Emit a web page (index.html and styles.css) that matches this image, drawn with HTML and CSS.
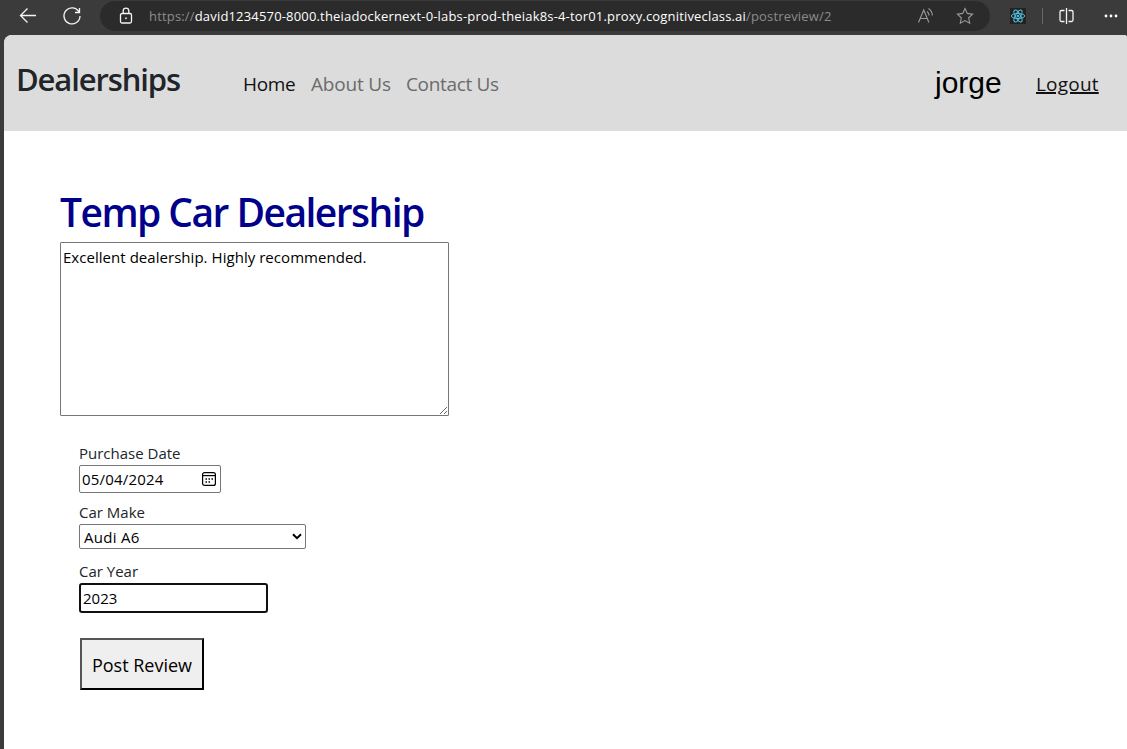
FILE: index.html
```html
<!DOCTYPE html>
<html lang="en">
<head>
<meta charset="utf-8">
<title>Post Review</title>
<link rel="stylesheet" href="styles.css">
</head>
<body>
<div class="toolbar">
  <svg class="icon back" width="24" height="24" viewBox="0 0 24 24"><path d="M20 11.5H4.5M11.5 4.5l-7 7 7 7"/></svg>
  <svg class="icon reload" width="24" height="24" viewBox="0 0 24 24"><path d="M19.1 8.2A8 8 0 1 0 20 12M19.5 4v4.5H15"/></svg>
  <div class="address">
    <svg class="icon lock" width="16" height="18" viewBox="0 0 16 18"><rect x="2.5" y="6.5" width="11" height="9.5" rx="1.5"/><path d="M5.2 6.5V4a2.8 2.8 0 0 1 5.600 0v2.500"/><rect class="solid" x="7.200" y="10.500" width="1.600" height="1.600"/></svg>
    <div class="url"><span class="scheme">https://</span><span class="host">david1234570-8000.theiadockernext-0-labs-prod-theiak8s-4-tor01.proxy.cognitiveclass.ai</span><span class="path">/postreview/2</span></div>
    <svg class="icon dim read" width="18" height="18" viewBox="0 0 18 18"><path d="M1.500 15.500L6.700 3l5.200 12.500M3.300 11.500h6.900M10 4.500q2 1.500 2 4M11.500 1.500q3.700 2.500 3.800 7"/></svg>
    <svg class="icon dim star" width="18" height="18" viewBox="0 0 18 18"><path d="M9 1.500l2.300 4.900 5.300.7-3.900 3.700 1 5.400L9 13.600l-4.700 2.600 1-5.400L1.400 7.100l5.300-.7z"/></svg>
  </div>
  <svg class="react" width="16" height="16" viewBox="0 0 16 16"><rect class="tile" width="16" height="16"/><g><ellipse cx="8" cy="8" rx="6.700" ry="2.500"/><ellipse cx="8" cy="8" rx="6.700" ry="2.500" transform="rotate(60 8 8)"/><ellipse cx="8" cy="8" rx="6.700" ry="2.500" transform="rotate(120 8 8)"/></g><circle cx="8" cy="8" r="1.300"/></svg>
  <span class="divider"></span>
  <svg class="icon split" width="18" height="18" viewBox="0 0 18 18"><path d="M6.500 3.500H3.500a1.500 1.500 0 0 0-1.500 1.500v8a1.500 1.500 0 0 0 1.500 1.500h3M10.500 3.500h3A1.500 1.500 0 0 1 15 5v8a1.500 1.500 0 0 1-1.500 1.500h-3M8.500 1v16"/></svg>
  <svg class="more" width="16" height="4" viewBox="0 0 16 4"><circle cx="3" cy="2" r="1.400"/><circle cx="8" cy="2" r="1.400"/><circle cx="13" cy="2" r="1.400"/></svg>
</div>
<div class="page">
  <nav class="navbar">
    <h2 class="brand">Dealerships</h2>
    <div class="links"><a class="home">Home</a><a class="about">About Us</a><a class="contact">Contact Us</a></div>
    <span class="user">jorge</span>
    <a class="logout">Logout</a>
  </nav>
  <main class="content">
    <h1 class="title">Temp Car Dealership</h1>
    <textarea class="review">Excellent dealership. Highly recommended.</textarea>
    <div class="form">
      <label class="label purchase">Purchase Date</label>
      <div class="date"><span>05/04/2024</span>
        <svg class="calendar" width="16" height="16" viewBox="0 0 16 16"><rect x="1.600" y="1.600" width="12.800" height="12.800" rx="2"/><path d="M1.600 4.600h12.800"/><path class="dots" d="M7.500 8h1.500M10.500 8H12M4.500 8H6M4.500 11H6M7.500 11H9"/></svg>
      </div>
      <label class="label make">Car Make</label>
      <div class="select"><span>Audi A6</span>
        <svg width="10" height="7" viewBox="0 0 10 7"><path d="M1 1.200l4 4 4-4"/></svg>
      </div>
      <label class="label year-label">Car Year</label>
      <input class="year" value="2023">
      <button class="submit"><span>Post Review</span></button>
    </div>
  </main>
</div>
</body>
</html>
```
FILE: styles.css
```css
* { box-sizing: border-box; }
body { margin: 0; width: 1127px; height: 749px; overflow: hidden; background: #3b3b3b; font-family: "Open Sans", "Noto Sans", sans-serif; color: #212529; }
.toolbar { height: 35px; display: flex; align-items: center; padding: 0 8px 4px 16px; background: #3b3b3b; }
.toolbar > * { flex: none; }
.icon { fill: none; stroke: #f4f4f4; stroke-width: 1.3; }
.icon .solid { fill: #f4f4f4; stroke: none; }
.icon.dim { stroke: #9a9a9a; stroke-width: 1.1; }
.reload { margin-left: 20px; }
.address { width: 890px; height: 30px; margin-left: 16px; padding: 0 16px 0 18px; display: flex; align-items: center; border-radius: 15px; background: #2b2b2b; }
.address > * { flex: none; }
.url { width: 753px; margin: 0 15px; font-size: 13px; line-height: 20px; letter-spacing: .173px; white-space: nowrap; color: #8b8b8b; }
.host { color: #fff; }
.star { margin-left: 21px; }
.react { margin-left: 20px; }
.react .tile { fill: #222; }
.react g { fill: none; stroke: #52c1de; stroke-width: 1; }
.react circle { fill: #52c1de; }
.divider { width: 1px; height: 16px; margin-left: 16px; background: #666; }
.split { margin-left: 15px; }
.more { margin-left: 27px; fill: #fff; }
.page { height: 714px; margin-left: 4px; background: #fff; border-radius: 8px 3px 0 0; overflow: hidden; }
.navbar { height: 96px; display: flex; align-items: flex-start; background: #dcdcdc; white-space: nowrap; }
.brand { width: 227px; margin: 25px 0 0; padding-left: 12px; font-size: 31px; line-height: 39px; font-weight: 600; letter-spacing: -1.12px; }
.links { display: flex; width: 704px; margin-top: 34px; padding-left: 12px; font-size: 19px; line-height: 30px; letter-spacing: -.35px; color: #6b6b6b; }
.links .home { width: 68px; color: #111; }
.links .about { width: 95px; letter-spacing: -.2px; }
.user { width: 101px; margin-top: 28px; font: 30px/40px "Liberation Sans", Arial, sans-serif; color: #000; }
.logout { margin-top: 34px; font-size: 19px; line-height: 30px; letter-spacing: .2px; text-decoration: underline; text-decoration-thickness: 2px; color: #111; }
.content { padding: 57px 56px 0; }
.title { margin: 0; font-size: 39px; line-height: 48px; font-weight: 600; letter-spacing: -1.55px; color: #00008b; white-space: nowrap; }
.review { display: block; width: 389px; height: 174px; margin: 6px 0 0; padding: 2px; border: 1px solid #767676; border-radius: 1px; font: 15px/24px "Open Sans", "Noto Sans", sans-serif; letter-spacing: .04px; color: #000; resize: both; overflow: hidden; white-space: nowrap; }
.form { padding: 25px 0 0 19px; display: flex; flex-direction: column; align-items: flex-start; font-size: 15px; }
.label { height: 23px; line-height: 24px; }
.date, .select { display: flex; align-items: center; justify-content: space-between; border: 1px solid #767676; border-radius: 2px; color: #000; background: #fff; }
.date { width: 142px; height: 28px; padding: 0 3px 0 2px; margin: 1px 0 7px; letter-spacing: .2px; }
.calendar { fill: none; stroke: #000; stroke-width: 1.2; }
.calendar .dots { stroke-width: 1.5; }
.select { width: 227px; height: 25px; margin: 1px 0 10px; padding: 0 3px 0 4px; letter-spacing: .3px; }
.select svg { fill: none; stroke: #000; stroke-width: 2; }
.year { width: 189px; height: 30px; margin: 1px 0 0; padding: 0 2px; border: 2px solid #101010; border-radius: 3px; font: 15px "Open Sans", "Noto Sans", sans-serif; outline: 0; color: #000; }
.submit { width: 124px; height: 52px; margin: 25px 0 0 1px; padding: 2px 0 0; border: 2px solid; border-color: #555 #000 #000 #555; background: #efefef; font: 18px "Open Sans", "Noto Sans", sans-serif; color: #000; white-space: nowrap; }
```
